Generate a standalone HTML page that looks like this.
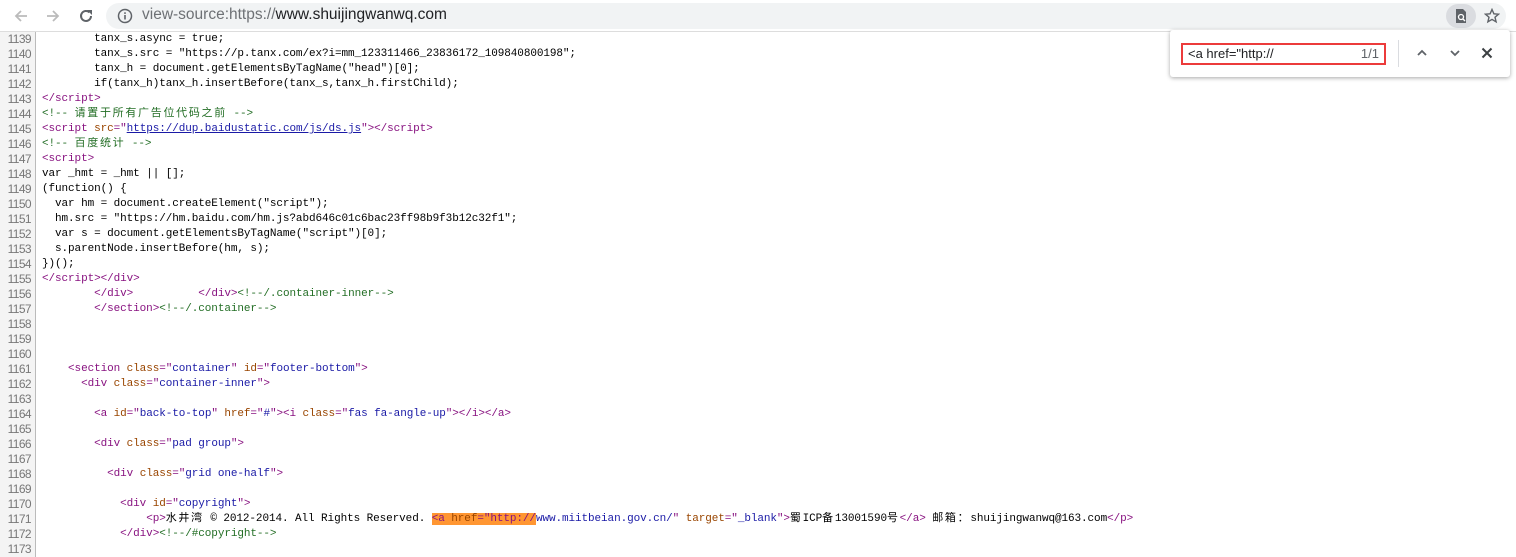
<!DOCTYPE html>
<html><head><meta charset="utf-8"><style>
body{margin:0;width:1516px;height:556px;overflow:hidden;background:#fff;font-family:"Liberation Sans",sans-serif;position:relative}
#bar{position:absolute;left:0;top:0;width:1516px;height:31px;background:#fff;border-bottom:1px solid #ddd}
#omni{position:absolute;left:106px;top:3px;width:1400px;height:26px;background:#f1f3f4;border-radius:13px}
#url{position:absolute;left:142px;top:5px;font-size:15.5px;color:#202124;line-height:20px}
#url span{color:#6e7175}
#code{position:absolute;left:0;top:32px;width:1516px}
.l{height:15px;line-height:15px;white-space:pre;font-family:"Liberation Mono","Noto Sans CJK SC",monospace;font-size:11px;letter-spacing:-0.09px;color:#000;position:relative;overflow:hidden}
.z{letter-spacing:1.7px}
.n{display:inline-block;height:15px;line-height:15px;width:31px;text-align:right;color:#777;background:#f4f4f4;padding-right:4px;border-right:1px solid #bbb;margin-right:6px;letter-spacing:-0.6px;font-family:"Liberation Sans",sans-serif;font-size:12px;vertical-align:top}
.t{color:#881280}.a{color:#994500}.v{color:#1a1aa6}.c{color:#236e25}.u{color:#1a1aa6;text-decoration:underline}
.hl{background:#ff9632}
#find{position:absolute;left:1170px;top:30px;width:340px;height:47px;background:#fff;border-radius:3px;box-shadow:0 1px 4px rgba(0,0,0,.35)}
#box{position:absolute;left:11px;top:13px;width:201px;height:18px;border:2px solid #ec3b3b}
#box .q{position:absolute;left:5px;top:1px;font-size:13px;color:#202124}
#box .k{position:absolute;right:5px;top:1px;font-size:13px;color:#5f6368}
</style></head><body>
<div id="bar">
<svg style="position:absolute;left:12px;top:7px" width="18" height="18" viewBox="0 0 18 18"><path d="M15 9H4M9 4L4 9l5 5" stroke="#bbb" stroke-width="1.8" fill="none"/></svg>
<svg style="position:absolute;left:44px;top:7px" width="18" height="18" viewBox="0 0 18 18"><path d="M3 9h11M9 4l5 5-5 5" stroke="#bbb" stroke-width="1.8" fill="none"/></svg>
<svg style="position:absolute;left:77px;top:7px" width="18" height="18" viewBox="0 0 18 18"><path d="M14 9a5 5 0 1 1-1.5-3.6" stroke="#5f6368" stroke-width="2" fill="none"/><path d="M10 3h5v5z" fill="#5f6368"/></svg>
<div id="omni"></div>
<svg style="position:absolute;left:117px;top:8px" width="16" height="16" viewBox="0 0 16 16"><circle cx="8" cy="8" r="6.5" stroke="#5f6368" stroke-width="1.5" fill="none"/><rect x="7.2" y="7" width="1.6" height="4.5" fill="#5f6368"/><rect x="7.2" y="4.3" width="1.6" height="1.6" fill="#5f6368"/></svg>
<div id="url"><span>view-source:https://</span>www.shuijingwanwq.com</div>
<div style="position:absolute;left:1446px;top:4px;width:30px;height:24px;border-radius:12px;background:#dadce0"></div>
<svg style="position:absolute;left:1453px;top:8px" width="16" height="16" viewBox="0 0 16 16"><path d="M3 1h7l3 3v11H3z" fill="#5f6368"/><circle cx="8" cy="9" r="2.5" stroke="#fff" stroke-width="1.3" fill="none"/><path d="M10 11l2 2" stroke="#fff" stroke-width="1.3"/></svg>
<svg style="position:absolute;left:1484px;top:8px" width="16" height="16" viewBox="0 0 16 16"><path d="M8 1.5l1.9 4.3 4.6.4-3.5 3 1.1 4.6L8 11.4l-4.1 2.4 1.1-4.6-3.5-3 4.6-.4z" stroke="#5f6368" stroke-width="1.4" fill="none"/></svg>
</div>
<div id="code">
<div class="l"><span class="n">1139</span>        tanx_s.async = true;</div>
<div class="l"><span class="n">1140</span>        tanx_s.src = "https://p.tanx.com/ex?i=mm_123311466_23836172_109840800198";</div>
<div class="l"><span class="n">1141</span>        tanx_h = document.getElementsByTagName("head")[0];</div>
<div class="l"><span class="n">1142</span>        if(tanx_h)tanx_h.insertBefore(tanx_s,tanx_h.firstChild);</div>
<div class="l"><span class="n">1143</span><span class="t">&lt;/script&gt;</span></div>
<div class="l"><span class="n">1144</span><span class="c">&lt;!-- <span class="z">请置于所有广告位代码之前</span> --&gt;</span></div>
<div class="l"><span class="n">1145</span><span class="t">&lt;script <span class="a">src</span>="<span class="u">https://dup.baidustatic.com/js/ds.js</span>"&gt;&lt;/script&gt;</span></div>
<div class="l"><span class="n">1146</span><span class="c">&lt;!-- <span class="z">百度统计</span> --&gt;</span></div>
<div class="l"><span class="n">1147</span><span class="t">&lt;script&gt;</span></div>
<div class="l"><span class="n">1148</span>var _hmt = _hmt || [];</div>
<div class="l"><span class="n">1149</span>(function() {</div>
<div class="l"><span class="n">1150</span>  var hm = document.createElement("script");</div>
<div class="l"><span class="n">1151</span>  hm.src = "https://hm.baidu.com/hm.js?abd646c01c6bac23ff98b9f3b12c32f1";</div>
<div class="l"><span class="n">1152</span>  var s = document.getElementsByTagName("script")[0];</div>
<div class="l"><span class="n">1153</span>  s.parentNode.insertBefore(hm, s);</div>
<div class="l"><span class="n">1154</span>})();</div>
<div class="l"><span class="n">1155</span><span class="t">&lt;/script&gt;&lt;/div&gt;</span></div>
<div class="l"><span class="n">1156</span>        <span class="t">&lt;/div&gt;</span>          <span class="t">&lt;/div&gt;</span><span class="c">&lt;!--/.container-inner--&gt;</span></div>
<div class="l"><span class="n">1157</span>        <span class="t">&lt;/section&gt;</span><span class="c">&lt;!--/.container--&gt;</span></div>
<div class="l"><span class="n">1158</span></div>
<div class="l"><span class="n">1159</span></div>
<div class="l"><span class="n">1160</span></div>
<div class="l"><span class="n">1161</span>    <span class="t">&lt;section <span class="a">class</span>="<span class="v">container</span>" <span class="a">id</span>="<span class="v">footer-bottom</span>"&gt;</span></div>
<div class="l"><span class="n">1162</span>      <span class="t">&lt;div <span class="a">class</span>="<span class="v">container-inner</span>"&gt;</span></div>
<div class="l"><span class="n">1163</span></div>
<div class="l"><span class="n">1164</span>        <span class="t">&lt;a <span class="a">id</span>="<span class="v">back-to-top</span>" <span class="a">href</span>="<span class="v">#</span>"&gt;&lt;i <span class="a">class</span>="<span class="v">fas fa-angle-up</span>"&gt;&lt;/i&gt;&lt;/a&gt;</span></div>
<div class="l"><span class="n">1165</span></div>
<div class="l"><span class="n">1166</span>        <span class="t">&lt;div <span class="a">class</span>="<span class="v">pad group</span>"&gt;</span></div>
<div class="l"><span class="n">1167</span></div>
<div class="l"><span class="n">1168</span>          <span class="t">&lt;div <span class="a">class</span>="<span class="v">grid one-half</span>"&gt;</span></div>
<div class="l"><span class="n">1169</span></div>
<div class="l"><span class="n">1170</span>            <span class="t">&lt;div <span class="a">id</span>="<span class="v">copyright</span>"&gt;</span></div>
<div class="l"><span class="n">1171</span>                <span class="t">&lt;p&gt;</span><span class="z">水井湾</span> © 2012-2014. All Rights Reserved. <span class="t"><span class="hl">&lt;a <span class="a">href</span>="http://</span><span class="v">www.miitbeian.gov.cn/</span>" <span class="a">target</span>="<span class="v">_blank</span>"&gt;</span><span class="z">蜀</span>ICP<span class="z">备</span>13001590<span class="z">号</span><span class="t">&lt;/a&gt;</span> <span class="z">邮箱：</span>shuijingwanwq@163.com<span class="t">&lt;/p&gt;</span></div>
<div class="l"><span class="n">1172</span>            <span class="t">&lt;/div&gt;</span><span class="c">&lt;!--/#copyright--&gt;</span></div>
<div class="l"><span class="n">1173</span></div>
</div>
<div id="find">
<div id="box"><span class="q">&lt;a href="http://</span><span class="k">1/1</span></div>
<div style="position:absolute;left:228px;top:10px;width:1px;height:27px;background:#dadce0"></div>
<svg style="position:absolute;left:246px;top:17px" width="12" height="12" viewBox="0 0 12 12"><path d="M2 8l4-4 4 4" stroke="#5f6368" stroke-width="1.8" fill="none"/></svg>
<svg style="position:absolute;left:279px;top:17px" width="12" height="12" viewBox="0 0 12 12"><path d="M2 4l4 4 4-4" stroke="#5f6368" stroke-width="1.8" fill="none"/></svg>
<svg style="position:absolute;left:311px;top:17px" width="12" height="12" viewBox="0 0 12 12"><path d="M1.5 1.5l9 9M10.5 1.5l-9 9" stroke="#3c4043" stroke-width="2" fill="none"/></svg>
</div>
</body></html>
